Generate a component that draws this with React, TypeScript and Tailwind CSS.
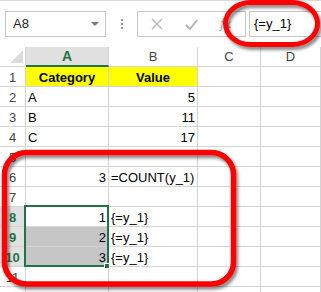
import React from "react";

const G = "border-r border-b border-[#d4d4d4]";

function RowHead({ n, sel }: { n?: number; sel?: boolean }) {
  return (
    <div
      className={`${G} flex items-end justify-center pb-[1px] text-[13px] leading-[15px] ${
        sel ? "bg-[#e1e1e1] text-[#217346] font-bold" : "bg-white text-[#444]"
      }`}
    >
      {n}
    </div>
  );
}

function Cell({
  children,
  right,
  bold,
  center,
  bg,
}: {
  children?: React.ReactNode;
  right?: boolean;
  bold?: boolean;
  center?: boolean;
  bg?: string;
}) {
  return (
    <div
      className={`${G} relative flex items-end pb-[1px] px-[2px] text-[13px] leading-[15px] text-black whitespace-nowrap overflow-visible ${
        right ? "justify-end" : center ? "justify-center" : "justify-start"
      } ${bold ? "font-bold" : ""} ${bg ?? ""}`}
    >
      {children}
    </div>
  );
}

export default function App() {
  return (
    <div className="relative w-[321px] h-[292px] overflow-hidden bg-white font-['Liberation_Sans',Arial,sans-serif]">
      {/* formula bar */}
      <div className="h-[47px] border-t border-[#d9d9d9] flex items-start pt-[10px]">
        <div className="ml-[5px] w-[101px] h-[26px] border border-[#c6c6c6] flex items-center pl-[7px] pr-[6px] justify-between">
          <span className="text-[13px] text-[#222]">A8</span>
          <svg width="8" height="4" viewBox="0 0 8 4">
            <path d="M0 0h8L4 4z" fill="#7a7a7a" />
          </svg>
        </div>
        <div className="w-[31px] h-[26px] flex flex-col items-center justify-center gap-[2px]">
          <div className="w-[2px] h-[2px] bg-[#9a9a9a]" />
          <div className="w-[2px] h-[2px] bg-[#9a9a9a]" />
          <div className="w-[2px] h-[2px] bg-[#9a9a9a]" />
        </div>
        <div className="w-[109px] h-[26px] border border-[#c6c6c6] flex items-center">
          <svg className="ml-[13px]" width="12" height="12" viewBox="0 0 12 12">
            <path d="M1 1L11 11M11 1L1 11" stroke="#b5b5b5" strokeWidth="1.3" fill="none" />
          </svg>
          <svg className="ml-[22px]" width="13" height="11" viewBox="0 0 13 11">
            <path d="M1 6l4 4L12 1" stroke="#b5b5b5" strokeWidth="2" fill="none" />
          </svg>
          <span className="ml-[22px] italic text-[12px] text-[#9a9a9a] font-['DejaVu_Serif',serif]">fx</span>
        </div>
        <div className="ml-[3px] flex-1 h-[26px] border border-r-0 border-[#c6c6c6] flex items-center pl-[4px]">
          <span className="text-[13px] text-black">{"{=y_1}"}</span>
        </div>
      </div>

      {/* grid */}
      <div className="grid grid-cols-[26px_83px_89px_63px_1fr] auto-rows-[20px]">
        <div className={`${G} relative bg-white`}>
          <svg className="absolute left-[10px] top-[3px]" width="13" height="13" viewBox="0 0 13 13">
            <path d="M13 0V13H0z" fill="#dcdcdc" />
          </svg>
        </div>
        <div className="border-r border-[#d4d4d4] border-b-2 border-b-[#217346] bg-[#e1e1e1] flex items-center justify-center text-[14px] font-bold text-[#217346]">
          A
        </div>
        <div className={`${G} flex items-center justify-center text-[13px] text-[#444]`}>B</div>
        <div className={`${G} flex items-center justify-center text-[13px] text-[#444]`}>C</div>
        <div className={`${G} flex items-center justify-center text-[13px] text-[#444]`}>D</div>

        <RowHead n={1} />
        <Cell center bold bg="bg-[#ffff00]">Category</Cell>
        <Cell center bold bg="bg-[#ffff00]">Value</Cell>
        <Cell />
        <Cell />

        <RowHead n={2} />
        <Cell>A</Cell>
        <Cell right>5</Cell>
        <Cell />
        <Cell />

        <RowHead n={3} />
        <Cell>B</Cell>
        <Cell right>11</Cell>
        <Cell />
        <Cell />

        <RowHead n={4} />
        <Cell>C</Cell>
        <Cell right>17</Cell>
        <Cell />
        <Cell />

        <RowHead n={5} />
        <Cell />
        <Cell />
        <Cell />
        <Cell />

        <RowHead n={6} />
        <Cell right>3</Cell>
        <Cell>=COUNT(y_1)</Cell>
        <Cell />
        <Cell />

        <RowHead n={7} />
        <Cell />
        <Cell />
        <Cell />
        <Cell />

        <RowHead n={8} sel />
        <Cell right>1</Cell>
        <Cell>{"{=y_1}"}</Cell>
        <Cell />
        <Cell />

        <RowHead n={9} sel />
        <Cell right bg="bg-[#c6c6c6]">2</Cell>
        <Cell>{"{=y_1}"}</Cell>
        <Cell />
        <Cell />

        <RowHead n={10} sel />
        <Cell right bg="bg-[#c6c6c6]">3</Cell>
        <Cell>{"{=y_1}"}</Cell>
        <Cell />
        <Cell />

        <RowHead n={11} />
        <Cell />
        <Cell />
        <Cell />
        <Cell />

        <RowHead />
        <Cell />
        <Cell />
        <Cell />
        <Cell />
      </div>

      {/* selection outline */}
      <div className="absolute left-[24px] top-[205px] w-[85px] h-[62px] border-2 border-[#217346] pointer-events-none" />
      <div className="absolute left-[104px] top-[263px] w-[6px] h-[6px] bg-[#217346] border border-white pointer-events-none" />

      {/* red annotation shapes */}
      <svg className="absolute left-0 top-0 pointer-events-none" width="321" height="292" viewBox="0 0 321 292">
        <defs>
          <filter id="sh" x="-10%" y="-10%" width="125%" height="130%">
            <feDropShadow dx="2" dy="3" stdDeviation="1.8" floodColor="#000" floodOpacity="0.45" />
          </filter>
        </defs>
        <rect x="225.5" y="2.5" width="92" height="42" rx="25" ry="21" fill="none" stroke="#ff0000" strokeWidth="5" filter="url(#sh)" />
        <rect x="4.5" y="152.5" width="229" height="131.5" rx="22" ry="22" fill="none" stroke="#ff0000" strokeWidth="5.5" filter="url(#sh)" />
      </svg>
    </div>
  );
}
